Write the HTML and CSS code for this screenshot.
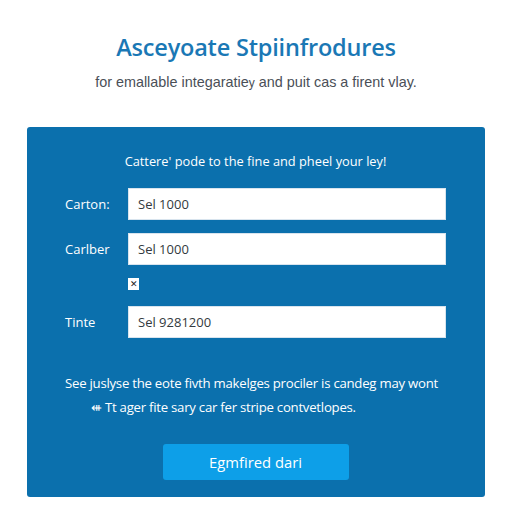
FILE: index.html
```html
<!DOCTYPE html>
<html>
<head>
<meta charset="utf-8">
<link rel="stylesheet" href="styles.css">
</head>
<body>
<header class="intro">
  <h1 class="title">Asceyoate Stpiinfrodures</h1>
  <p class="subtitle">for emallable integaratie<span class="y">y</span> and puit cas a firent vlay.</p>
</header>
<main class="panel">
  <p class="panel-lead">Cattere' pode to the fine and pheel your ley!</p>
  <div class="form">
    <label class="label">Carton:</label>
    <div class="field">Sel 1000</div>
    <label class="label">Carlber</label>
    <div class="field">Sel 1000</div>
    <span></span>
    <div class="check-wrap"><span class="check">&#x2715;</span></div>
    <label class="label">Tinte</label>
    <div class="field">Sel 9281200</div>
  </div>
  <div class="note">
    <p class="note-line">See juslyse the eote fivth makelges prociler is candeg may wont</p>
    <p class="note-line indent">&#x21FA; Tt ager fite sary car fer stripe contvetlopes.</p>
  </div>
  <div class="actions">
    <button class="btn">Egmfired dari</button>
  </div>
</main>
</body>
</html>
```
FILE: styles.css
```css
html, body {
  margin: 0;
  padding: 0;
  background: #ffffff;
  font-family: "Open Sans", "Liberation Sans", sans-serif;
}
.intro {
  text-align: center;
  padding-top: 30px;
  height: 127px;
  box-sizing: border-box;
}
.title {
  margin: 0;
  font-size: 23.5px;
  line-height: 34px;
  font-weight: 600;
  color: #1a78b5;
  letter-spacing: -0.2px;
}
.subtitle {
  margin: 7px 0 0;
  font-family: "Liberation Sans", Arial, sans-serif;
  font-size: 14.4px;
  line-height: 22px;
  color: #4a4f57;
}
.y { font-size: 12px; }
.panel {
  margin: 0 27px;
  background: #0b70ad;
  border-radius: 3px;
  padding: 23px 39px 17px 38px;
  color: #ffffff;
}
.panel-lead {
  margin: 0;
  text-align: center;
  font-size: 12.8px;
  line-height: 22px;
}
.form {
  display: grid;
  grid-template-columns: 63px 1fr;
  row-gap: 13px;
  align-items: center;
  margin-top: 16px;
}
.label {
  font-size: 13px;
}
.field {
  height: 32px;
  background: #ffffff;
  border: 1px solid #d8e4ee;
  box-sizing: border-box;
  color: #333a40;
  font-size: 13px;
  line-height: 30px;
  padding-left: 9px;
}
.check-wrap {
  height: 12px;
  margin-bottom: 3px;
}
.check {
  display: block;
  width: 11px;
  height: 12px;
  background: #ffffff;
  color: #222;
  font-size: 9px;
  line-height: 12px;
  text-align: center;
}
.note {
  margin-top: 33px;
}
.note-line {
  margin: 0;
  font-size: 13.2px;
  line-height: 24px;
  white-space: nowrap;
  letter-spacing: -0.25px;
}
.indent { margin-left: 26px; }
.actions {
  margin-top: 25px;
  display: flex;
  justify-content: center;
}
.btn {
  width: 186px;
  height: 36px;
  border: none;
  border-radius: 3px;
  background: #0d9fe8;
  color: #ffffff;
  font-family: "Open Sans", "Liberation Sans", sans-serif;
  font-size: 14.8px;
}
```
